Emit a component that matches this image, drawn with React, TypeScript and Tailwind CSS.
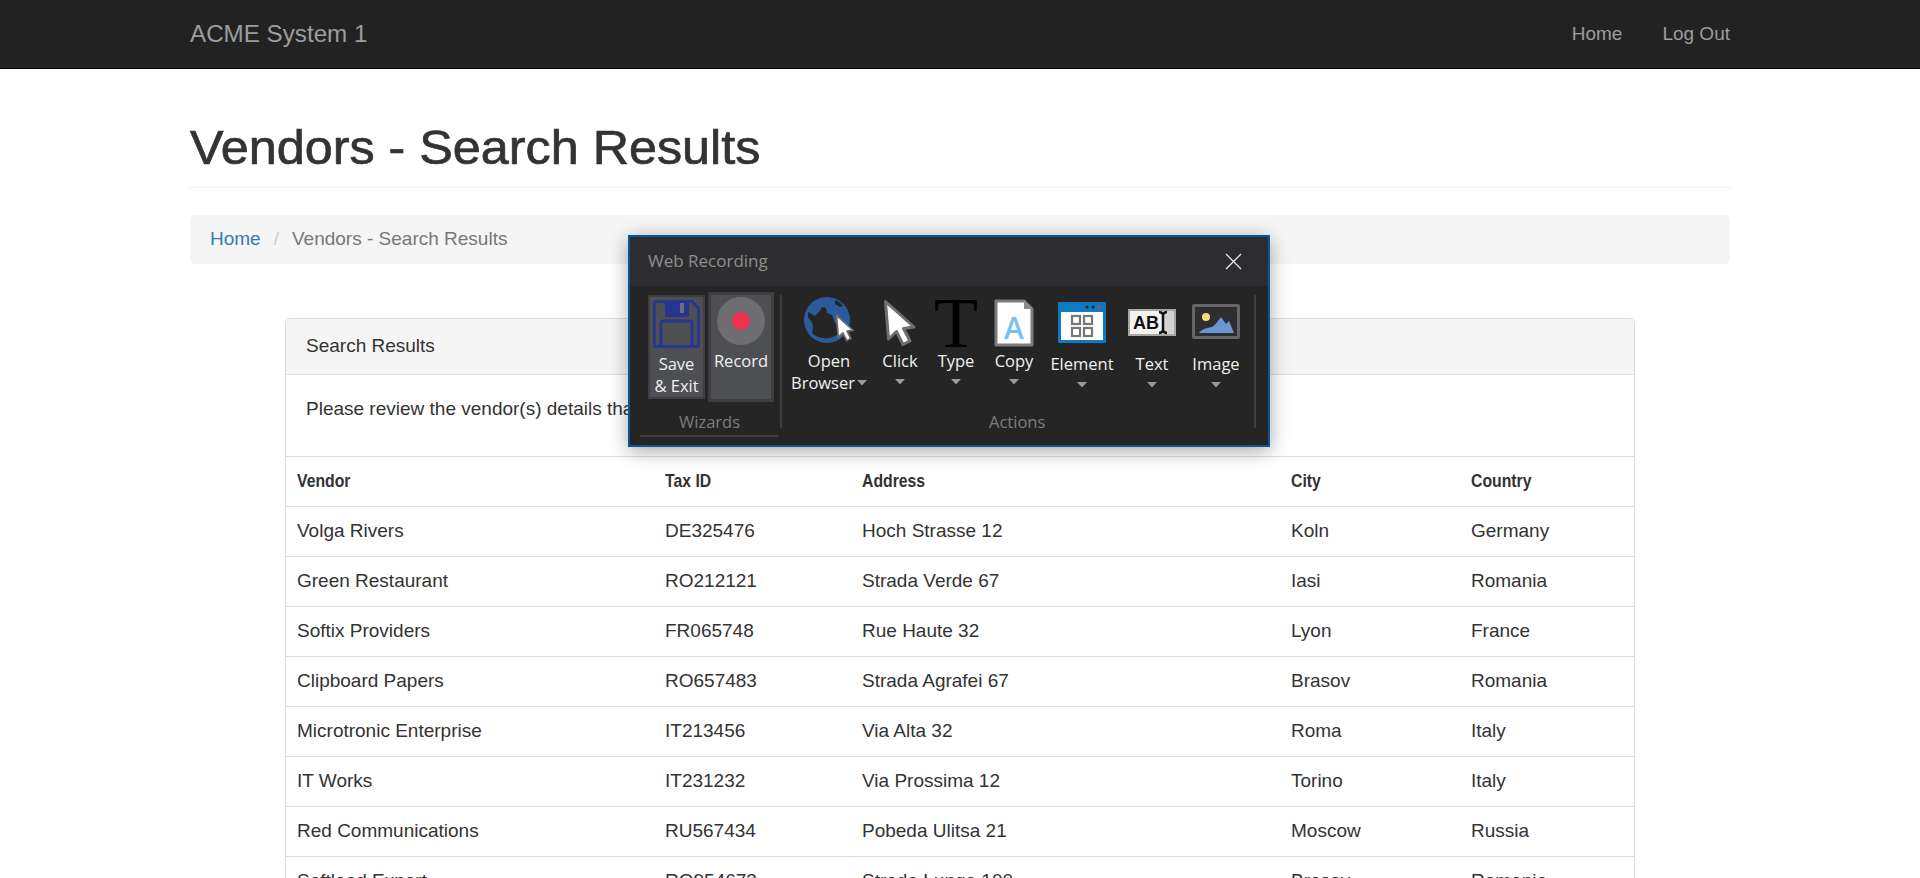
import React from 'react'

const rows = [
  ['Volga Rivers', 'DE325476', 'Hoch Strasse 12', 'Koln', 'Germany'],
  ['Green Restaurant', 'RO212121', 'Strada Verde 67', 'Iasi', 'Romania'],
  ['Softix Providers', 'FR065748', 'Rue Haute 32', 'Lyon', 'France'],
  ['Clipboard Papers', 'RO657483', 'Strada Agrafei 67', 'Brasov', 'Romania'],
  ['Microtronic Enterprise', 'IT213456', 'Via Alta 32', 'Roma', 'Italy'],
  ['IT Works', 'IT231232', 'Via Prossima 12', 'Torino', 'Italy'],
  ['Red Communications', 'RU567434', 'Pobeda Ulitsa 21', 'Moscow', 'Russia'],
  ['Softlead Export', 'RO954673', 'Strada Lunga 100', 'Brasov', 'Romania'],
]

const Caret = () => (
  <svg width="10" height="6" viewBox="0 0 10 6" className="block">
    <path d="M0 0h10L5 5.5z" fill="#9a9a9a" />
  </svg>
)

const CursorIcon: React.FC<{ className?: string }> = ({ className }) => (
  <svg viewBox="0 0 34 48" className={className}>
    <path
      d="M2.5 2.5 L31 28 L20.5 29.5 L27 42 L20 45.5 L13.5 32.5 L5.5 40 Z"
      fill="#fff"
      stroke="#6f6f6f"
      strokeWidth="3"
      strokeLinejoin="round"
    />
  </svg>
)

const Action: React.FC<{
  label: string
  width: string
  low?: boolean
  children: React.ReactNode
}> = ({ label, width, low, children }) => (
  <div className={`flex flex-col items-center ${width}`}>
    <div className="flex h-[56px] w-full items-end justify-center">{children}</div>
    <span className={`text-[16.5px] leading-[22px] text-[#f1f1f1] ${low ? 'mt-[6px]' : 'mt-[3px]'}`}>
      {label}
    </span>
    <div className="mt-[7px]">
      <Caret />
    </div>
  </div>
)

const RecordingDialog = () => (
  <div className="absolute left-[628px] top-[235px] w-[642px] h-[212px] border-2 border-[#0b5596] bg-[#252526] font-['Open_Sans','Noto_Sans',sans-serif] shadow-[0_4px_18px_rgba(0,0,0,0.35)]">
    <div className="flex h-[49px] items-center justify-between bg-[#2d2d30] pl-[18px] pr-[26px]">
      <span className="text-[17px] text-[#8f8f8f]">Web Recording</span>
      <svg width="17" height="17" viewBox="0 0 17 17">
        <path d="M1 1l15 15M16 1L1 16" stroke="#e8e8e8" strokeWidth="1.3" />
      </svg>
    </div>
    <div className="flex">
      <div className="flex w-[150px] flex-col pl-[10px]">
        <div className="flex items-center gap-[3px] pl-[8px] pt-[6px]">
          <div className="flex h-[104px] w-[57px] flex-col items-center border-2 border-[#3f3f42] bg-[#4e4f53] pt-[3px]">
            <svg width="47" height="48" viewBox="0 0 47 48">
              <path
                d="M3 1.5h36l6.5 6.5v36a2.5 2.5 0 0 1-2.5 2.5H3.5A2.5 2.5 0 0 1 1 44V3.5a2 2 0 0 1 2-2z"
                fill="none"
                stroke="#27358f"
                strokeWidth="3"
              />
              <rect x="12" y="1" width="24" height="16" rx="1" fill="#27358f" />
              <rect x="27" y="3" width="4" height="10" fill="#6d6d78" />
              <path d="M8 46V23a2 2 0 0 1 2-2h27a2 2 0 0 1 2 2v23" fill="none" stroke="#27358f" strokeWidth="3" />
            </svg>
            <span className="mt-[5px] text-center text-[16.5px] leading-[22px] text-[#f1f1f1]">
              Save
              <br />
              &amp; Exit
            </span>
          </div>
          <div className="flex h-[110px] w-[66px] flex-col items-center border-[3px] border-[#3f3f42] bg-[#4e4f53] pt-[2px]">
            <svg width="48" height="48" viewBox="0 0 48 48">
              <circle cx="24" cy="24" r="24" fill="#6e6e70" />
              <circle cx="24" cy="24" r="9" fill="#f0344f" />
            </svg>
            <span className="mt-[5px] text-[16.5px] leading-[22px] text-[#f1f1f1]">Record</span>
          </div>
        </div>
        <span className="mt-[8px] pl-[39px] text-[16.5px] leading-[24px] text-[#7d7d7d]">Wizards</span>
        <div className="mt-[1px] h-[2px] w-[138px] bg-[#3f3f42]" />
      </div>
      <div className="mt-[9px] h-[133px] w-[2px] bg-[#3f3f42]" />
      <div className="flex w-[472px] flex-col pl-[4px]">
        <div className="flex h-[124px] pt-[5px]">
          <div className="flex w-[86px] flex-col items-center">
            <div className="relative h-[56px] w-[50px]">
              <svg width="50" height="50" viewBox="0 0 50 50" className="absolute left-0 top-[6px]">
                <circle cx="23" cy="23" r="23" fill="#2c5b9b" />
                <path
                  d="M4.3 15L11 19l4-4 3-5 4 1 1 5 5 2 3 8 7 7A20 20 0 0 1 8 36q2-6 0-10l-4-6z"
                  fill="#252526"
                />
                <path d="M31 3c3 1 6 3 8 6l-3 1-5-3z" fill="#252526" />
              </svg>
              <CursorIcon className="absolute left-[31px] top-[23px] h-[28px] w-[20px]" />
            </div>
            <span className="mt-[3px] text-[16.5px] leading-[22px] text-[#f1f1f1]">Open</span>
            <span className="flex items-center gap-[2px] text-[16.5px] leading-[22px] text-[#f1f1f1]">
              Browser
              <Caret />
            </span>
          </div>
          <Action label="Click" width="w-[56px]">
            <CursorIcon className="h-[48px] w-[34px]" />
          </Action>
          <Action label="Type" width="w-[56px]">
            <span className="font-['Liberation_Serif',serif] text-[72px] leading-[48px] text-black">T</span>
          </Action>
          <Action label="Copy" width="w-[60px]">
            <svg width="40" height="48" viewBox="0 0 40 48">
              <path d="M2 2h28l8 8v36H2z" fill="#fff" stroke="#7c7c7c" strokeWidth="3" strokeLinejoin="round" />
              <path d="M30 1l9 9h-9z" fill="#8a8a8a" />
              <text x="20" y="40" textAnchor="middle" fontSize="30" fontWeight="600" fontFamily="Open Sans" fill="#7cc0ea">
                A
              </text>
            </svg>
          </Action>
          <Action label="Element" width="w-[76px]" low>
            <svg width="48" height="41" viewBox="0 0 48 41" className="mb-[4px]">
              <rect width="48" height="41" rx="1" fill="#0f7ac0" />
              <rect x="3" y="10" width="42" height="28" fill="#fff" />
              <circle cx="29" cy="5" r="1.6" fill="#1d2b3a" />
              <circle cx="35" cy="5" r="1.6" fill="#1d2b3a" />
              <circle cx="41" cy="5" r="1.6" fill="#e8354d" />
              <g fill="none" stroke="#777" strokeWidth="2.2">
                <rect x="14" y="14" width="8" height="8" />
                <rect x="26" y="14" width="8" height="8" />
                <rect x="14" y="26" width="8" height="8" />
                <rect x="26" y="26" width="8" height="8" />
              </g>
            </svg>
          </Action>
          <Action label="Text" width="w-[64px]" low>
            <svg width="48" height="27" viewBox="0 0 48 27" className="mb-[11px]">
              <rect x="1" y="1" width="46" height="25" fill="#f2f2f2" stroke="#a8a89f" strokeWidth="2" />
              <rect x="34" y="2" width="12" height="23" fill="#d2d2d2" />
              <text x="5" y="20" fontSize="18" fontWeight="700" fontFamily="Liberation Sans" fill="#111">
                AB
              </text>
              <path d="M31 3c2 0 3 1 4 2 1-1 2-2 4-2M35 5v17M31 24c2 0 3-1 4-2 1 1 2 2 4 2" fill="none" stroke="#111" strokeWidth="2.5" />
            </svg>
          </Action>
          <Action label="Image" width="w-[64px]" low>
            <svg width="48" height="35" viewBox="0 0 48 35" className="mb-[8px]">
              <rect x="1.5" y="1.5" width="45" height="32" rx="1" fill="#2e2e30" stroke="#66666a" strokeWidth="3" />
              <circle cx="14" cy="13" r="4" fill="#f5dc7a" />
              <path d="M7 29c4-5 9-5 13-6 3-1 7-8 9-10l5 7 3-3 5 12z" fill="#6a97d2" />
            </svg>
          </Action>
        </div>
        <span className="pl-[203px] text-[16.5px] leading-[24px] text-[#7d7d7d]">Actions</span>
      </div>
      <div className="mt-[9px] h-[133px] w-[2px] bg-[#3f3f42]" />
    </div>
  </div>
)

export default function App() {
  return (
    <div className="relative h-[878px] overflow-hidden bg-white font-['Liberation_Sans',sans-serif] text-[19px] leading-[26.67px] text-[#333]">
      <nav className="h-[69px] border-b border-black bg-[#222]">
        <div className="mx-auto flex h-[68px] w-[1540px] items-center justify-between text-[#9d9d9d]">
          <span className="text-[24.2px]">ACME System 1</span>
          <div className="flex gap-[40px]">
            <span>Home</span>
            <span>Log Out</span>
          </div>
        </div>
      </nav>

      <div className="mx-auto w-[1540px]">
        <div className="mt-[52px] border-b border-[#eee] pb-[12px]">
          <h1 className="origin-left scale-x-[1.048] text-[48px] leading-[54px] [-webkit-text-stroke:0.7px_#333]">
            Vendors - Search Results
          </h1>
        </div>
        <div className="mt-[27px] flex h-[49px] items-center gap-[13px] rounded-[5px] bg-[#f5f5f5] px-[20px]">
          <span className="text-[#337ab7]">Home</span>
          <span className="text-[#ccc]">/</span>
          <span className="text-[#777]">Vendors - Search Results</span>
        </div>

        <div className="mx-auto mt-[54px] w-[1350px] rounded-[5px] border border-[#ddd]">
          <div className="h-[56px] rounded-t-[4px] border-b border-[#ddd] bg-[#f5f5f5] px-[20px] py-[14px]">
            Search Results
          </div>
          <div className="h-[81px] px-[20px] pt-[21px]">Please review the vendor(s) details that were found.</div>
          <table className="w-full table-fixed border-collapse">
            <thead>
              <tr className="h-[50px] border-t border-[#ddd]">
                <th className="w-[368px] px-[11px] text-left font-bold"><span className="inline-block origin-left scale-x-[0.83]">Vendor</span></th>
                <th className="w-[197px] px-[11px] text-left font-bold"><span className="inline-block origin-left scale-x-[0.83]">Tax ID</span></th>
                <th className="w-[429px] px-[11px] text-left font-bold"><span className="inline-block origin-left scale-x-[0.83]">Address</span></th>
                <th className="w-[180px] px-[11px] text-left font-bold"><span className="inline-block origin-left scale-x-[0.83]">City</span></th>
                <th className="px-[11px] text-left font-bold"><span className="inline-block origin-left scale-x-[0.83]">Country</span></th>
              </tr>
            </thead>
            <tbody>
              {rows.map((row) => (
                <tr key={row[0]} className="h-[50px] border-t border-[#ddd]">
                  {row.map((cell) => (
                    <td key={cell} className="px-[11px]">{cell}</td>
                  ))}
                </tr>
              ))}
            </tbody>
          </table>
        </div>
      </div>

      <RecordingDialog />
    </div>
  )
}
